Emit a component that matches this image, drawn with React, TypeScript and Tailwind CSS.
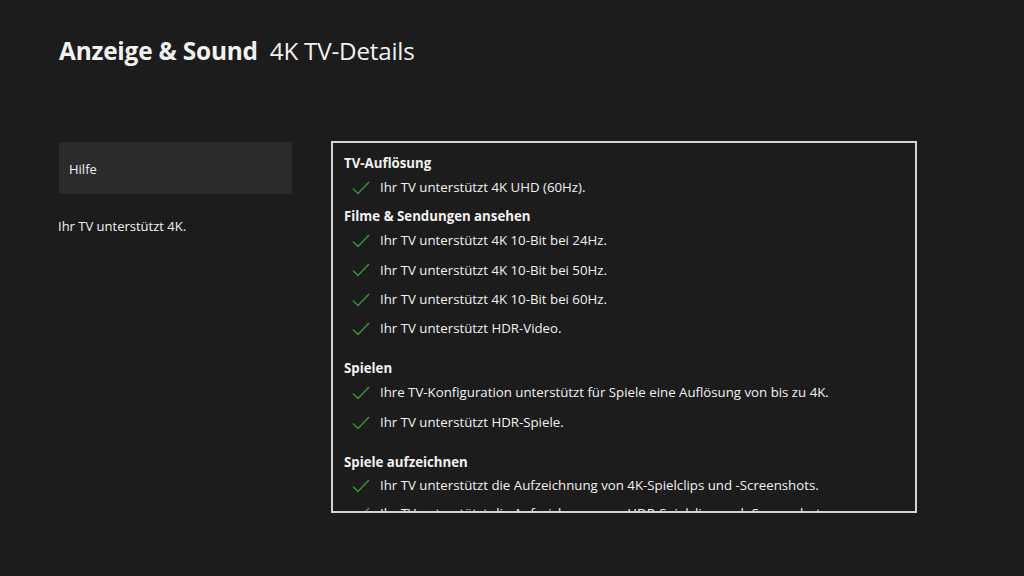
import React from "react";

const Check = () => (
  <svg width="18" height="14" viewBox="0 0 18 14" className="shrink-0">
    <path d="M1 7.5 L6 12.5 L17 1" fill="none" stroke="#359535" strokeWidth="1.5" />
  </svg>
);

const Item = ({ text, className = "" }: { text: string; className?: string }) => (
  <div className={"flex items-center h-[29.4px] pl-[8px] " + className}>
    <Check />
    <span className="ml-[10px]">{text}</span>
  </div>
);

const Heading = ({ text, className = "" }: { text: string; className?: string }) => (
  <div className={"font-bold h-[18.5px] flex items-center " + className}>{text}</div>
);

export default function App() {
  return (
    <div
      className="w-[1024px] h-[576px] bg-[#1c1c1c] text-[#f2f2f2] overflow-hidden"
      style={{ fontFamily: '"Open Sans", "Noto Sans", sans-serif' }}
    >
      <div className="pt-[35px] pl-[59px] flex items-baseline gap-[12px] h-[67px]">
        <span className="text-[24.4px] font-bold leading-[32px] tracking-[-0.2px]">Anzeige &amp; Sound</span>
        <span className="text-[24.2px] leading-[32px] tracking-[-0.2px]">4K TV-Details</span>
      </div>
      <div className="flex pl-[59px] mt-[74px]">
        <div className="w-[233px] flex flex-col">
          <div className="h-[52px] mt-[1px] bg-[#2b2b2b] flex items-center pl-[10px] pt-[4px] text-[13px]">Hilfe</div>
          <div className="mt-[23px] text-[13px] leading-[18px] -ml-[1px]">Ihr TV unterstützt 4K.</div>
        </div>
        <div className="ml-[39px] w-[586px] h-[372px] border-2 border-[#d4d4d4] overflow-hidden pl-[11px] pt-[12px] text-[13.25px]">
          <Heading text="TV-Auflösung" />
          <Item text="Ihr TV unterstützt 4K UHD (60Hz)." />
          <Heading text="Filme & Sendungen ansehen" className="mt-[5px]" />
          <Item text="Ihr TV unterstützt 4K 10-Bit bei 24Hz." />
          <Item text="Ihr TV unterstützt 4K 10-Bit bei 50Hz." />
          <Item text="Ihr TV unterstützt 4K 10-Bit bei 60Hz." />
          <Item text="Ihr TV unterstützt HDR-Video." />
          <Heading text="Spielen" className="mt-[16px]" />
          <Item text="Ihre TV-Konfiguration unterstützt für Spiele eine Auflösung von bis zu 4K." />
          <Item text="Ihr TV unterstützt HDR-Spiele." />
          <Heading text="Spiele aufzeichnen" className="mt-[16px]" />
          <Item text="Ihr TV unterstützt die Aufzeichnung von 4K-Spielclips und -Screenshots." />
          <Item text="Ihr TV unterstützt die Aufzeichnung von HDR-Spielclips und -Screenshots." className="-mt-[2px]" />
        </div>
      </div>
    </div>
  );
}
